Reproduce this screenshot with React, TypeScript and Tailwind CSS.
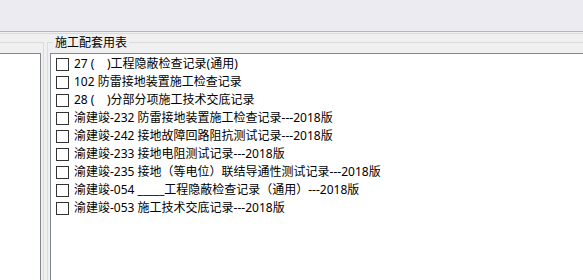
const items = [
  "27 (    )工程隐蔽检查记录(通用)",
  "102 防雷接地装置施工检查记录",
  "28 (    )分部分项施工技术交底记录",
  "渝建竣-232 防雷接地装置施工检查记录---2018版",
  "渝建竣-242 接地故障回路阻抗测试记录---2018版",
  "渝建竣-233 接地电阻测试记录---2018版",
  "渝建竣-235 接地（等电位）联结导通性测试记录---2018版",
  "渝建竣-054 _____工程隐蔽检查记录（通用）---2018版",
  "渝建竣-053 施工技术交底记录---2018版",
];

const CheckRow = ({ label }: { label: string }) => (
  <div className="flex h-[18px] items-center">
    <span className="h-[13px] w-[13px] shrink-0 border border-[#333333] bg-white" />
    <span className="ml-[5px] whitespace-pre text-[12px] leading-[18px] text-black">{label}</span>
  </div>
);

export default function App() {
  return (
    <div className="flex h-[280px] w-[583px] flex-col overflow-hidden bg-[#f0f0f0] font-['Noto_Sans','Noto_Sans_CJK_SC',sans-serif]">
      <div className="h-[32px] shrink-0 border-b border-[#a4b8de] bg-[#ecebf1]" />
      <div className="flex-1 pt-[1px]">
        <div className="flex w-[620px] items-start border-t border-[#dadada]">
          {/* left group, mostly off screen */}
          <div className="mt-[8px] h-[260px] w-[44px] shrink-0 border-t border-r border-[#dcdcdc] pt-[10px] pr-[2px]">
            <div className="h-full border-t border-r border-[#828790] bg-white" />
          </div>

          {/* right group */}
          <fieldset className="ml-[3px] h-[270px] flex-1 border border-[#dcdcdc] p-0">
            <legend className="ml-[5px] px-[2px] text-[12px] leading-[17px] text-black">施工配套用表</legend>
            <div className="mt-[2px] ml-[2px] h-[240px] border-t border-l border-[#828790] bg-white pt-[1px] pl-[5px]">
              {items.map((t) => (
                <CheckRow key={t} label={t} />
              ))}
            </div>
          </fieldset>
        </div>
      </div>
    </div>
  );
}
